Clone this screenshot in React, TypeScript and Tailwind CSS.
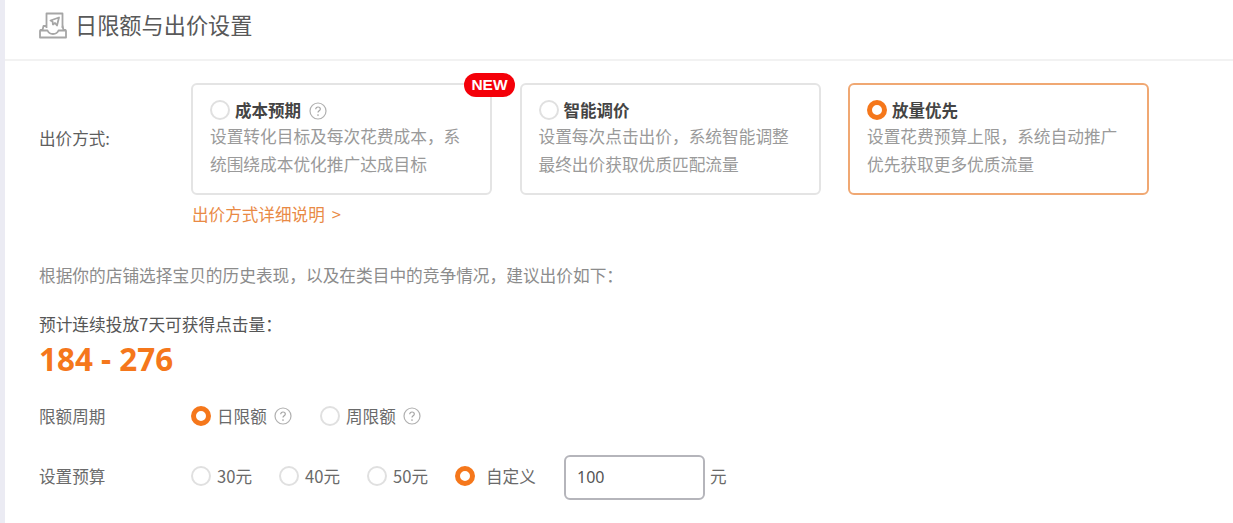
import React from "react";

function Help({ className = "" }: { className?: string }) {
  return (
    <svg viewBox="0 0 18 18" className={"w-[18px] h-[18px] shrink-0 " + className} fill="none">
      <circle cx="9" cy="9" r="8" stroke="#b0b0b0" strokeWidth="1.2" />
      <path d="M6.7 7.2c0-1.3 1-2.2 2.3-2.2s2.3.9 2.3 2c0 1.8-2.3 1.800-2.300 3.600" stroke="#a4a4a4" strokeWidth="1.2" />
      <circle cx="9" cy="13" r=".85" fill="#a4a4a4" />
    </svg>
  );
}

function Radio({ on }: { on?: boolean }) {
  return on ? (
    <span className="w-[20px] h-[20px] rounded-full border-[5px] border-[#f5771b] bg-white shrink-0" />
  ) : (
    <span className="w-[20px] h-[20px] rounded-full border-2 border-[#e0e0e0] bg-white shrink-0" />
  );
}

function Card({ title, lines, on, help, badge }: { title: string; lines: string[]; on?: boolean; help?: boolean; badge?: boolean }) {
  return (
    <div
      className={
        "relative w-[301px] h-[112px] rounded-[6px] border-2 pl-[17px] pt-[15px] " +
        (on ? "border-[#f0a873]" : "border-[#e4e4e4]")
      }
    >
      <div className="flex items-center h-[20px]">
        <Radio on={on} />
        <span className="ml-[5px] text-[16.5px] font-bold text-[#444444] leading-[20px]">{title}</span>
        {help && <Help className="ml-[8px] mt-[2px]" />}
      </div>
      <div className="mt-[3px] text-[16.7px] leading-[27.5px] text-[#9a9a9a] whitespace-nowrap">
        {lines.map((l) => (
          <div key={l}>{l}</div>
        ))}
      </div>
      {badge && (
        <span className="absolute -top-[12px] -right-[25px] w-[51px] h-[24px] rounded-full bg-[#f40009] text-white text-[15.5px] font-bold leading-[24px] text-center font-['Liberation_Sans',sans-serif]">
          NEW
        </span>
      )}
    </div>
  );
}

function Opt({ label, on, w, help }: { label: string; on?: boolean; w: string; help?: boolean }) {
  return (
    <div className={"flex items-center " + w}>
      <Radio on={on} />
      <span className="ml-[6px] text-[16.6px] text-[#6a6a6a] whitespace-nowrap">{label}</span>
      {help && <Help className="ml-[7px]" />}
    </div>
  );
}

export default function App() {
  return (
    <div className="w-[1233px] h-[523px] overflow-hidden flex bg-white font-['Noto_Sans_CJK_SC',sans-serif]">
      <div className="w-[5px] bg-[#ebebf3] shrink-0" />
      <div className="flex-1 flex flex-col">
        <div className="h-[61px] shrink-0 border-b-2 border-[#f2f2f2] flex items-center pl-[34px] pb-[10px]">
          <svg viewBox="0 0 28 27" className="w-[28px] h-[27px] mt-[2px]" fill="none" stroke="#a6a6a6" strokeWidth="1.8" strokeLinejoin="round">
            <path d="M7.500 16V1.500h16V16" />
            <path d="M11.500 8.500l8.500-3-2 8-2-2.500-2 1.500-.5-3z" />
            <path d="M7.500 14H4.500L3.500 18H1.500L1 19v6.500h26V19l-.5-1h-2l-1-4H23" />
            <path d="M1.500 18.500h7c1 2.500 3 3.500 5.500 3.500s4.500-1 5.500-3.500h7" />
          </svg>
          <span className="ml-[8px] text-[22.2px] text-[#595959] leading-none whitespace-nowrap">日限额与出价设置</span>
        </div>

        <div className="flex pl-[34px] pt-[22px]">
          <div className="w-[152px] pt-[43px] text-[16.6px] text-[#5e5e5e] whitespace-nowrap">出价方式:</div>
          <div>
            <div className="flex gap-[27.5px]">
              <Card title="成本预期" help badge lines={["设置转化目标及每次花费成本，系", "统围绕成本优化推广达成目标"]} />
              <Card title="智能调价" lines={["设置每次点击出价，系统智能调整", "最终出价获取优质匹配流量"]} />
              <Card title="放量优先" on lines={["设置花费预算上限，系统自动推广", "优先获取更多优质流量"]} />
            </div>
            <div className="mt-[8px] pl-[1px] text-[16.6px] leading-[22px] text-[#e98a45] whitespace-nowrap">
              出价方式详细说明<span className="ml-[7px]">&gt;</span>
            </div>
          </div>
        </div>

        <div className="pl-[34px] mt-[39px] text-[16.7px] leading-[22px] text-[#8c8c8c] whitespace-nowrap">
          根据你的店铺选择宝贝的历史表现，以及在类目中的竞争情况，建议出价如下：
        </div>
        <div className="pl-[34px] mt-[27px] text-[16.7px] leading-[22px] text-[#555555] whitespace-nowrap">预计连续投放7天可获得点击量：</div>
        <div className="pl-[34px] mt-[6px] text-[31.4px] leading-[36px] font-bold text-[#f5771b] font-['Open_Sans',sans-serif] whitespace-nowrap">184 - 276</div>

        <div className="flex items-center pl-[34px] mt-[28px] h-[22px]">
          <div className="w-[152px] text-[16.6px] text-[#6a6a6a]">限额周期</div>
          <Opt label="日限额" on help w="w-[129px]" />
          <Opt label="周限额" help w="w-[110px]" />
        </div>

        <div className="flex items-center pl-[34px] mt-[27px] h-[44px]">
          <div className="w-[152px] text-[16.6px] text-[#6a6a6a]">设置预算</div>
          <Opt label="30元" w="w-[88px]" />
          <Opt label="40元" w="w-[88px]" />
          <Opt label="50元" w="w-[88px]" />
          <div className="flex items-center w-[109px]">
            <Radio on />
            <span className="ml-[11px] text-[16.6px] text-[#6a6a6a] whitespace-nowrap">自定义</span>
          </div>
          <div className="w-[141px] h-[45px] mt-[2px] rounded-[6px] border-2 border-[#b5b5bb] flex items-center pl-[11px] text-[16px] text-[#555555] font-['Noto_Sans',sans-serif]">100</div>
          <span className="ml-[5px] text-[16.6px] text-[#6a6a6a]">元</span>
        </div>
      </div>
    </div>
  );
}
